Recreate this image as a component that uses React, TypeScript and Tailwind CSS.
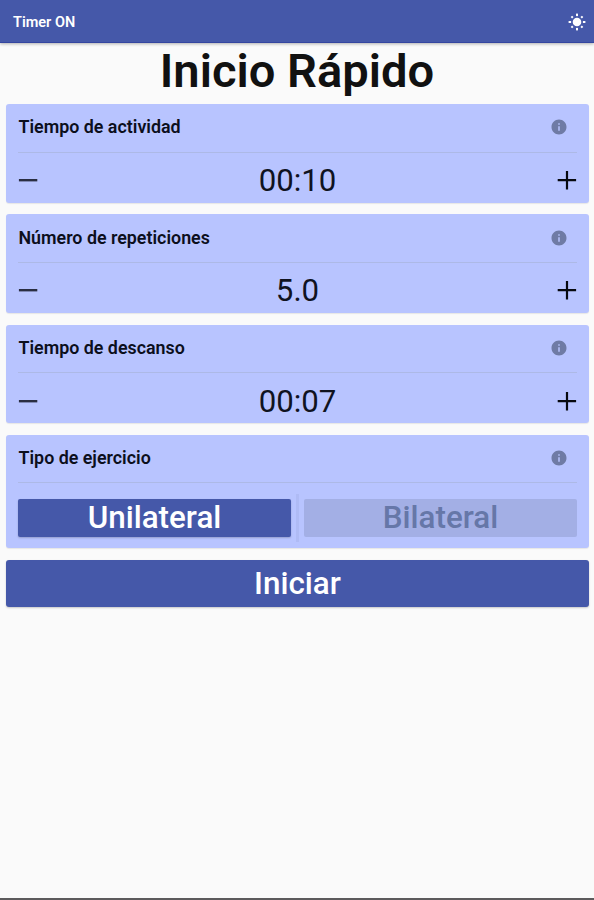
import type { ReactNode } from "react";
import { MdInfo } from "react-icons/md";

interface SettingCardProps {
  title: string;
  children: ReactNode;
}

function SunIcon() {
  return (
    <svg viewBox="0 0 18 18" className="size-[18px]" fill="white">
      <circle cx="9" cy="9" r="4.3" />
      <rect x="8" y="0.6" width="2" height="2.5" />
      <rect x="8" y="14.9" width="2" height="2.5" />
      <rect x="0.6" y="8" width="2.5" height="2" />
      <rect x="14.9" y="8" width="2.5" height="2" />
      <g transform="rotate(45 9 9)">
        <rect x="8" y="1.1" width="2" height="2" />
        <rect x="8" y="14.9" width="2" height="2" />
        <rect x="1.1" y="8" width="2" height="2" />
        <rect x="14.9" y="8" width="2" height="2" />
      </g>
    </svg>
  );
}

function MinusIcon() {
  return (
    <svg viewBox="0 0 20 20" className="size-5" stroke="#2a2e42" strokeWidth="2.4">
      <path d="M0.9 10.2H19.3" />
    </svg>
  );
}

function PlusIcon() {
  return (
    <svg viewBox="0 0 20 20" className="size-5" stroke="#07090f" strokeWidth="2.2">
      <path d="M0.7 10.2H19.1M10 1V19.4" />
    </svg>
  );
}

function SettingCard({ title, children }: SettingCardProps) {
  return (
    <section className="rounded-[3px] bg-[#b8c4ff] px-3 shadow-[0_1px_1px_rgba(0,0,0,0.08)]">
      <div className="flex h-[48.5px] items-center justify-between border-b border-[#adb9e6] pr-[9px] pl-[0.5px]">
        <h2 className="text-[17.85px] font-semibold text-[#0c0f1c]">{title}</h2>
        <button aria-label="Información" className="-mt-px">
          <MdInfo className="size-[18px] text-[#6f7ba5]" />
        </button>
      </div>
      {children}
    </section>
  );
}

function Stepper({ value }: { value: string }) {
  return (
    <div className="flex h-[50.1px] items-center justify-between pt-[5px]">
      <button aria-label="Menos">
        <MinusIcon />
      </button>
      <span className="pt-px text-[31.2px] leading-none text-[#10131f]">{value}</span>
      <button aria-label="Más">
        <PlusIcon />
      </button>
    </div>
  );
}

const steppers = [
  { title: "Tiempo de actividad", value: "00:10" },
  { title: "Número de repeticiones", value: "5.0" },
  { title: "Tiempo de descanso", value: "00:07" },
];

export default function App() {
  return (
    <div className="flex h-[900px] w-[594px] flex-col border-b-2 border-[#5c5a5c] bg-[#fafafa] font-['Roboto',sans-serif]">
      <header className="flex h-[42.5px] shrink-0 items-center justify-between border-b border-[#3446a0] bg-[#4558a9] pr-2 pl-[13px] shadow-[0_1px_3px_rgba(0,0,0,0.3)]">
        <span className="pt-1 text-[14.5px] font-semibold text-white">Timer ON</span>
        <button aria-label="Tema" className="pt-0.5">
          <SunIcon />
        </button>
      </header>

      <h1 className="flex h-[61.5px] shrink-0 items-center justify-center pb-[3.5px] text-[47.1px] font-semibold text-[#111111]">
        Inicio Rápido
      </h1>

      <main className="flex flex-col gap-[11.7px] pr-[5px] pl-1.5">
        {steppers.map((item) => (
          <SettingCard key={item.title} title={item.title}>
            <Stepper value={item.value} />
          </SettingCard>
        ))}

        <SettingCard title="Tipo de ejercicio">
          <div className="flex h-[64.5px] items-center justify-between pt-[5px]">
            <button className="h-[37.5px] w-[273px] rounded-[2px] bg-[#4558a9] text-[31.4px] leading-none font-medium text-white shadow-[0_1px_2px_rgba(0,0,0,0.2)]">
              Unilateral
            </button>
            <div className="h-12 w-[3px] bg-[#afbbf5]" />
            <button className="h-[37.5px] w-[273px] rounded-[2px] bg-[#a3afe5] text-[31.4px] leading-none font-medium text-[#6677a8]">
              Bilateral
            </button>
          </div>
        </SettingCard>

        <button className="h-[47.5px] rounded-[3px] bg-[#4558a9] text-[31.4px] leading-none font-medium text-white shadow-[0_1px_2px_rgba(0,0,0,0.2)]">
          Iniciar
        </button>
      </main>
    </div>
  );
}
